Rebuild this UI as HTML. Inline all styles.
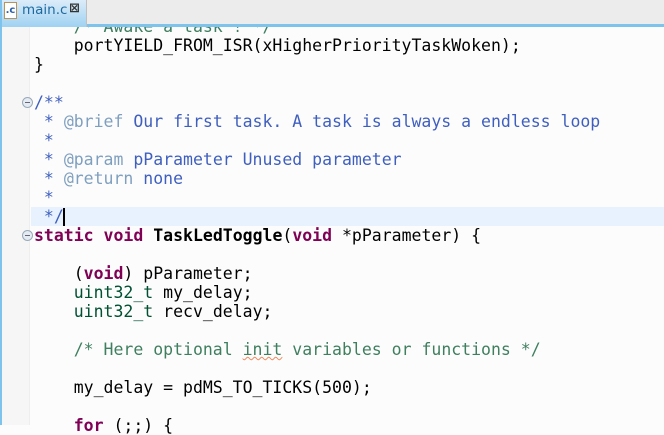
<!DOCTYPE html>
<html><head><style>
html,body{margin:0;padding:0;width:664px;height:425px;overflow:hidden;background:#fcfcfc;font-family:"DejaVu Sans Mono",monospace}
#top{position:absolute;left:0;top:0;width:664px;height:24px;background:#ececec;z-index:3}
#line{position:absolute;left:0;top:24px;width:664px;height:3px;background:#7ec3ec;z-index:3}
#tab{position:absolute;left:0;top:0;width:86px;height:27px;background:linear-gradient(#dcecf9,#9fd2f2);z-index:4;border-right:1px solid #c0c0c0}
#tab span{position:absolute;left:22px;top:2px;font:13.5px "DejaVu Sans",sans-serif;color:#1e6aa0}
#ic{position:absolute;left:4px;top:2px;width:11px;height:15px;background:#fff;border:1px solid #b9935a;font:bold 10px "DejaVu Sans",sans-serif;color:#2a5fa8;text-align:center;line-height:16px}
#x{position:absolute;left:69px;top:1px;font:bold 13px "DejaVu Sans",sans-serif;color:#333}
#strip{position:absolute;left:0;top:0;width:2px;height:425px;background:#7ec3ec;z-index:5}
#gut{position:absolute;left:2px;top:27px;width:27px;height:398px;background:#f6f6f6;border-right:1px solid #eee}
#hl{position:absolute;left:31px;top:207px;width:633px;height:19px;background:#e8f2fe}
#code{position:absolute;left:34px;top:17px;font-size:16.5px;line-height:19px;white-space:pre;color:#000}
.c{color:#3f7f5f}.d{color:#3f5fbf}.t{color:#7f9fbf}.k{color:#7f0055;font-weight:bold}.y{color:#005032}.b{font-weight:bold}
.f{position:absolute;left:22px;width:9px;height:9px;border-radius:50%;border:1px solid #9aa9b8;background:#e4ebf2}
.f::after{content:"";position:absolute;left:2px;top:4px;width:5px;height:1px;background:#667}
#cur{position:absolute;left:63px;top:208px;width:2px;height:18px;background:#000}
.sq{text-decoration:underline wavy #f08a5d;text-decoration-thickness:1px}
</style></head><body>
<div id="top"></div><div id="line"></div>
<div id="tab"><div id="ic">.c</div><span>main.c</span><div id="x">⊠</div></div>
<div id="strip"></div><div id="gut"></div><div id="hl"></div>
<div class="f" style="top:97px"></div><div class="f" style="top:230px"></div>
<div id="code"><span class="c">    /* Awake a task ! */</span>
    portYIELD_FROM_ISR(xHigherPriorityTaskWoken);
}

<span class="d">/**</span>
<span class="d"> * </span><span class="t">@brief</span><span class="d"> Our first task. A task is always a endless loop</span>
<span class="d"> *</span>
<span class="d"> * </span><span class="t">@param</span><span class="d"> pParameter Unused parameter</span>
<span class="d"> * </span><span class="t">@return</span><span class="d"> none</span>
<span class="d"> *</span>
<span class="d"> */</span>
<span class="k">static</span> <span class="k">void</span> <span class="b">TaskLedToggle</span>(<span class="k">void</span> *pParameter) {

    (<span class="k">void</span>) pParameter;
    <span class="y">uint32_t</span> my_delay;
    <span class="y">uint32_t</span> recv_delay;

<span class="c">    /* Here optional <span class="sq">init</span> variables or functions */</span>

    my_delay = pdMS_TO_TICKS(500);

    <span class="k">for</span> (;;) {</div>
<div id="cur"></div>
</body></html>
